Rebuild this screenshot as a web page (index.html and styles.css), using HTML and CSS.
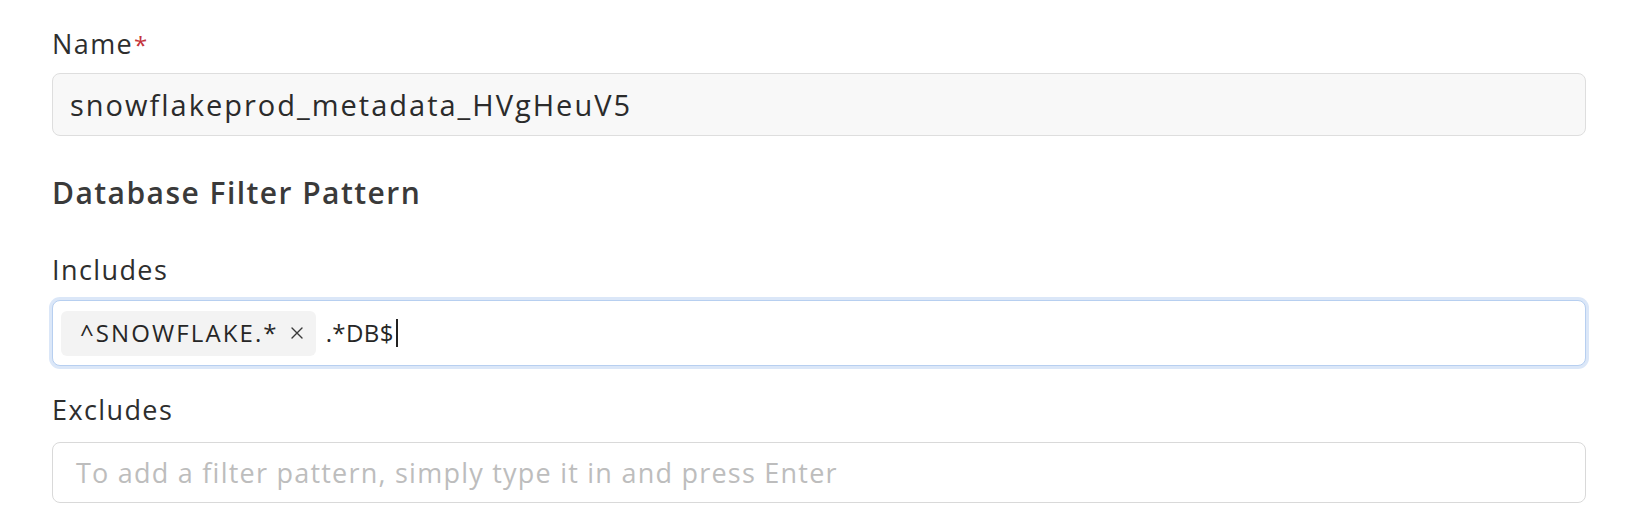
FILE: index.html
```html
<!DOCTYPE html>
<html lang="en">
<head>
<meta charset="utf-8">
<title>Service config</title>
<link rel="stylesheet" href="styles.css">
</head>
<body>
<form class="form">
  <div class="label label-name">Name<span class="req">*</span></div>
  <div class="field field-disabled"><span class="value">snowflakeprod_metadata_HVgHeuV5</span></div>

  <h2 class="heading">Database Filter Pattern</h2>

  <div class="label label-inc">Includes</div>
  <div class="field field-tags field-focus">
    <span class="chip"><span class="chip-text">^SNOWFLAKE.*</span><svg class="chip-x" viewBox="0 0 14 14" width="14" height="14"><path d="M2 2 L12 12 M12 2 L2 12" stroke="#3a3a3a" stroke-width="1.4" fill="none" stroke-linecap="round"/></svg></span>
    <span class="typed">.*DB$</span><span class="caret"></span>
  </div>

  <div class="label label-exc">Excludes</div>
  <div class="field field-empty"><span class="placeholder">To add a filter pattern, simply type it in and press Enter</span></div>
</form>
</body>
</html>
```

FILE: styles.css
```css
html, body {
  margin: 0;
  padding: 0;
  background: #ffffff;
}

body {
  font-family: "Open Sans", "Noto Sans", sans-serif;
  color: #2b2b2b;
}

.form {
  display: flex;
  flex-direction: column;
  padding: 26px 46px 0 52px;
}

.label {
  font-size: 27px;
  line-height: 36px;
  letter-spacing: 1.4px;
  color: #2e2e2e;
}

.req {
  color: #c4343a;
  margin-left: 1px;
  font-size: 24px;
  line-height: 1;
  letter-spacing: 0;
}

.field {
  box-sizing: border-box;
  display: flex;
  align-items: center;
  border: 1px solid #dedede;
  border-radius: 8px;
  background: #ffffff;
  font-size: 27px;
  line-height: 36px;
}

.field-disabled {
  margin-top: 11px;
  height: 63px;
  padding-left: 17px;
  background: #f8f8f8;
  color: #2b2b2b;
}

.value {
  font-size: 29px;
  letter-spacing: 2px;
}

.heading {
  margin: 37px 0 0 0;
  font-size: 30px;
  line-height: 40px;
  font-weight: 600;
  letter-spacing: 1.45px;
  color: #3a3a3a;
}

.label-inc {
  margin-top: 39px;
}

.field-tags {
  margin-top: 12px;
  height: 66px;
  padding-left: 8px;
  gap: 10px;
}

.field-focus {
  border-color: #b7cff0;
  box-shadow: 0 0 0 3px #dbe7f8;
}

.chip {
  display: flex;
  align-items: center;
  height: 45px;
  padding: 0 12px 0 19px;
  gap: 11px;
  background: #f3f3f3;
  border-radius: 6px;
  font-size: 24px;
  letter-spacing: 2.1px;
  color: #262626;
}

.chip-x {
  display: block;
}

.typed {
  font-size: 24px;
  letter-spacing: 0.4px;
  color: #262626;
}

.caret {
  display: block;
  width: 2px;
  height: 28px;
  margin-left: -8px;
  background: #222222;
}

.label-exc {
  margin-top: 26px;
}

.field-empty {
  margin-top: 14px;
  height: 61px;
  padding-left: 23px;
  border-color: #d9d9d9;
}

.placeholder {
  letter-spacing: 1.23px;
  color: #bdbdbd;
}
```
